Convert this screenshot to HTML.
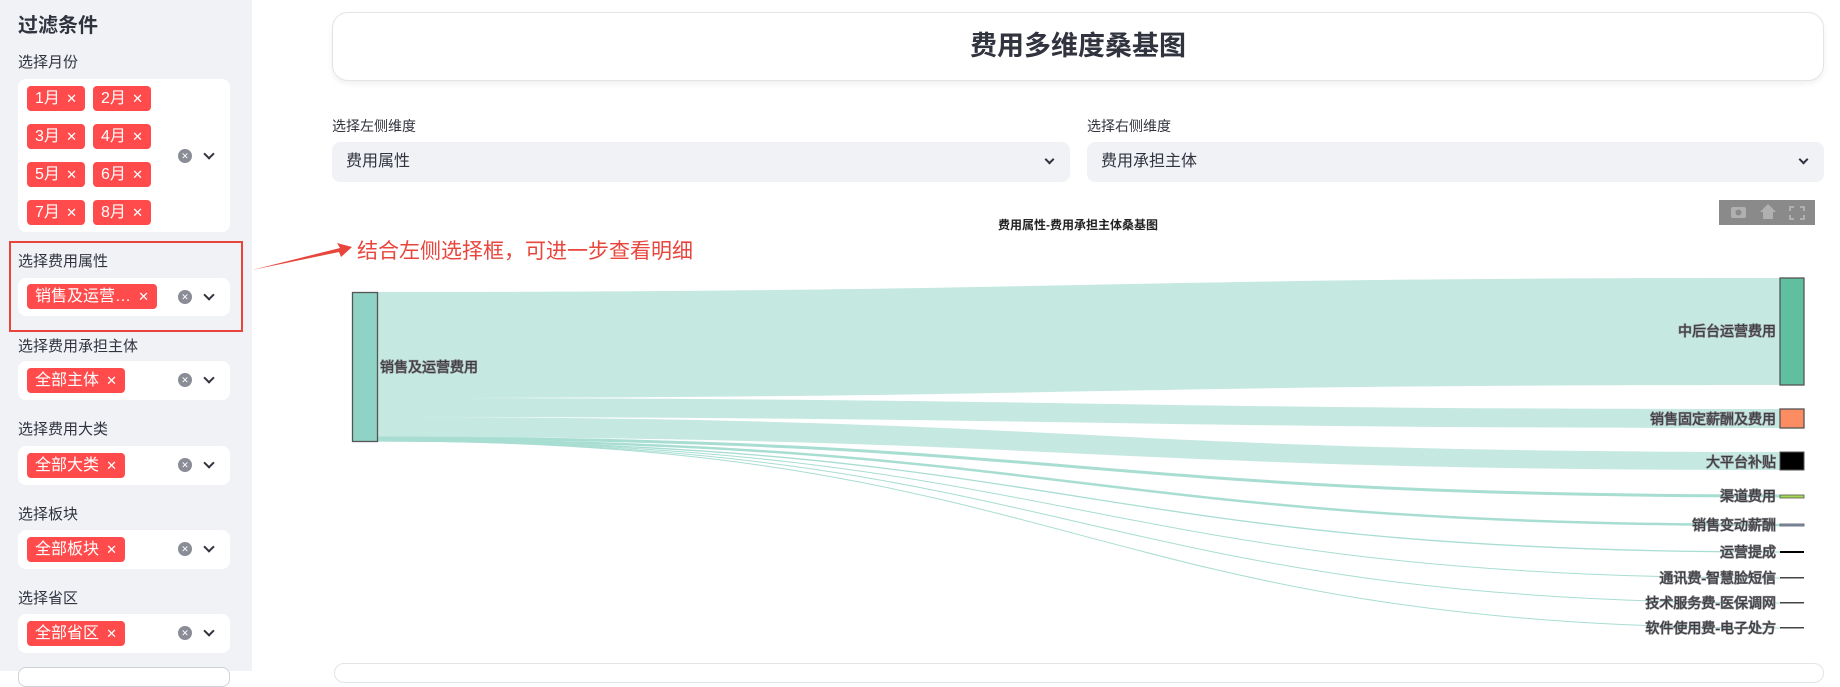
<!DOCTYPE html>
<html><head><meta charset="utf-8"><style>
*{box-sizing:border-box;margin:0;padding:0}
body{width:1840px;height:671px;overflow:hidden;background:#fff;font-family:"Liberation Sans","Noto Sans CJK SC",sans-serif;color:#31333f;position:relative}
.side{position:absolute;left:0;top:0;width:252px;height:671px;background:#f0f2f6}
.abs{position:absolute}
.h{left:18px;top:9px;font-size:20px;font-weight:bold}
.lbl{font-size:15px;color:#31333f;left:18px}
.box{left:18px;width:212px;background:#fff;border-radius:8px}
.tag{position:absolute;height:25px;background:#ff4b4b;color:#fff;border-radius:4px;font-size:16px;line-height:25px;padding-left:8px}
.tag i{position:absolute;right:8px;top:0;font-style:normal;font-size:13px}
.clr{position:absolute;width:14px;height:14px;border-radius:50%;background:#8a8c96;color:#fff;font-size:9px;line-height:14px;text-align:center}
.chev{position:absolute;width:8px;height:8px;border-right:2px solid #31333f;border-bottom:2px solid #31333f;transform:rotate(45deg)}
</style></head><body>
<div class="side">
<div class="abs h">过滤条件</div>
<div class="abs lbl" style="top:51px">选择月份</div>
<div class="abs box" style="top:79px;height:153px">
 <div class="tag" style="left:9px;top:7px;width:58px">1月<i>✕</i></div>
 <div class="tag" style="left:75px;top:7px;width:58px">2月<i>✕</i></div>
 <div class="tag" style="left:9px;top:45px;width:58px">3月<i>✕</i></div>
 <div class="tag" style="left:75px;top:45px;width:58px">4月<i>✕</i></div>
 <div class="tag" style="left:9px;top:83px;width:58px">5月<i>✕</i></div>
 <div class="tag" style="left:75px;top:83px;width:58px">6月<i>✕</i></div>
 <div class="tag" style="left:9px;top:121px;width:58px">7月<i>✕</i></div>
 <div class="tag" style="left:75px;top:121px;width:58px">8月<i>✕</i></div>
 <div class="clr" style="left:160px;top:70px">✕</div><div class="chev" style="left:187px;top:71px"></div>
</div>
<div class="abs" style="left:9px;top:241px;width:234px;height:91px;border:2px solid #e8453c"></div>
<div class="abs lbl" style="top:250px">选择费用属性</div>
<div class="abs box" style="top:278px;height:38px">
 <div class="tag" style="left:9px;top:6px;width:130px">销售及运营…<i>✕</i></div>
 <div class="clr" style="left:160px;top:12px">✕</div><div class="chev" style="left:187px;top:13px"></div>
</div>
<div class="abs lbl" style="top:335px">选择费用承担主体</div>
<div class="abs box" style="top:361px;height:39px">
 <div class="tag" style="left:9px;top:7px;width:98px">全部主体<i>✕</i></div>
 <div class="clr" style="left:160px;top:12px">✕</div><div class="chev" style="left:187px;top:13px"></div>
</div>
<div class="abs lbl" style="top:418px">选择费用大类</div>
<div class="abs box" style="top:446px;height:39px">
 <div class="tag" style="left:9px;top:7px;width:98px">全部大类<i>✕</i></div>
 <div class="clr" style="left:160px;top:12px">✕</div><div class="chev" style="left:187px;top:13px"></div>
</div>
<div class="abs lbl" style="top:503px">选择板块</div>
<div class="abs box" style="top:530px;height:39px">
 <div class="tag" style="left:9px;top:7px;width:98px">全部板块<i>✕</i></div>
 <div class="clr" style="left:160px;top:12px">✕</div><div class="chev" style="left:187px;top:13px"></div>
</div>
<div class="abs lbl" style="top:587px">选择省区</div>
<div class="abs box" style="top:614px;height:39px">
 <div class="tag" style="left:9px;top:7px;width:98px">全部省区<i>✕</i></div>
 <div class="clr" style="left:160px;top:12px">✕</div><div class="chev" style="left:187px;top:13px"></div>
</div>
<div class="abs box" style="top:667px;height:20px;border:1px solid #d0d2d8"></div>
</div>

<div class="abs" style="left:332px;top:12px;width:1492px;height:69px;border:1px solid #e4e4e8;border-radius:16px;box-shadow:0 3px 6px rgba(0,0,0,.06);text-align:center;font-size:27px;font-weight:bold;line-height:66px">费用多维度桑基图</div>
<div class="abs" style="left:332px;top:116px;font-size:14px">选择左侧维度</div>
<div class="abs" style="left:332px;top:142px;width:738px;height:40px;background:#f0f2f6;border-radius:8px;font-size:16px;line-height:40px;padding-left:14px">费用属性<div class="chev" style="left:714px;top:14px;width:7px;height:7px"></div></div>
<div class="abs" style="left:1087px;top:116px;font-size:14px">选择右侧维度</div>
<div class="abs" style="left:1087px;top:142px;width:737px;height:40px;background:#f0f2f6;border-radius:8px;font-size:16px;line-height:40px;padding-left:14px">费用承担主体<div class="chev" style="left:713px;top:14px;width:7px;height:7px"></div></div>
<div class="abs" style="left:334px;top:663px;width:1490px;height:20px;border:1px solid #e4e4e8;border-radius:12px"></div>

<svg class="abs" style="left:0;top:0" width="1840" height="671">
<g fill="#c5e8e0">
<path d="M377 292 C1078 292 1078 278 1780 278 L1780 385 C1078 385 1078 398 377 398Z"/>
<path d="M377 398 C1078 398 1078 409 1780 409 L1780 428 C1078 428 1078 417 377 417Z"/>
<path d="M377 417 C1078 417 1078 452 1780 452 L1780 470 C1078 470 1078 437 377 437Z"/>
</g>
<g fill="none" stroke="#a8ddd2">
<path d="M377 438 C1078 438 1078 496 1780 496" stroke-width="3"/>
<path d="M377 440 C1078 440 1078 525 1780 525" stroke-width="2.5"/>
<path d="M377 441 C1078 441 1078 552 1780 552" stroke-width="1.3"/>
<path d="M377 441 C1078 441 1078 578 1780 578" stroke-width="1"/>
<path d="M377 441 C1078 441 1078 603 1780 603" stroke-width="1"/>
<path d="M377 441 C1078 441 1078 628 1780 628" stroke-width="1"/>
</g>
<rect x="352.5" y="292.5" width="25" height="149" fill="#8fd3c6" stroke="#555" stroke-width="1.3"/>
<rect x="1780" y="278" width="24" height="107" fill="#5fbf9f" stroke="#555" stroke-width="1.3"/>
<rect x="1780" y="409" width="24" height="19" fill="#fc8d62" stroke="#555" stroke-width="1.3"/>
<rect x="1780" y="452" width="24" height="18" fill="#000" stroke="#555" stroke-width="1"/>
<rect x="1780" y="495" width="24" height="3" fill="#a6d854" stroke="#555" stroke-width=".8"/>
<rect x="1780" y="524" width="24" height="2" fill="#8da0cb" stroke="#555" stroke-width=".8"/>
<rect x="1780" y="551" width="24" height="2" fill="#000"/>
<rect x="1780" y="577" width="24" height="1.5" fill="#444"/>
<rect x="1780" y="602" width="24" height="1.5" fill="#444"/>
<rect x="1780" y="627" width="24" height="1.5" fill="#444"/>
<g font-family="Liberation Sans,Noto Sans CJK SC,sans-serif" font-size="14" fill="#3a3a44" stroke="#888" stroke-width="1.2" paint-order="stroke">
<text x="380" y="372">销售及运营费用</text>
<g text-anchor="end">
<text x="1776" y="336">中后台运营费用</text>
<text x="1776" y="424">销售固定薪酬及费用</text>
<text x="1776" y="467">大平台补贴</text>
<text x="1776" y="501">渠道费用</text>
<text x="1776" y="530">销售变动薪酬</text>
<text x="1776" y="557">运营提成</text>
<text x="1776" y="583">通讯费-智慧脸短信</text>
<text x="1776" y="608">技术服务费-医保调网</text>
<text x="1776" y="633">软件使用费-电子处方</text>
</g></g>
<text x="1078" y="229" text-anchor="middle" font-family="Liberation Sans,Noto Sans CJK SC,sans-serif" font-size="12" font-weight="bold" fill="#222">费用属性-费用承担主体桑基图</text>
<rect x="1719" y="200" width="96" height="25" fill="#8a8a8a"/>
<g fill="#b0b0b0"><rect x="1731" y="207" width="15" height="11" rx="2"/><rect x="1763" y="211" width="10" height="8"/><path d="M1760 212 L1768 204 L1776 212Z"/></g>
<circle cx="1738.5" cy="212.5" r="3" fill="#8a8a8a"/>
<path d="M1800 207 h4 v4 M1800 219 h4 v-4 M1794 207 h-4 v4 M1794 219 h-4 v-4" stroke="#b0b0b0" stroke-width="2" fill="none"/>
<path d="M252 270 L340 248 L337 243 L352 247 L341 257 L339 252 Z" fill="#e8453c"/>
<text x="357" y="258" font-family="Liberation Sans,Noto Sans CJK SC,sans-serif" font-size="21" fill="#e8453c">结合左侧选择框，可进一步查看明细</text>
</svg>
</body></html>
